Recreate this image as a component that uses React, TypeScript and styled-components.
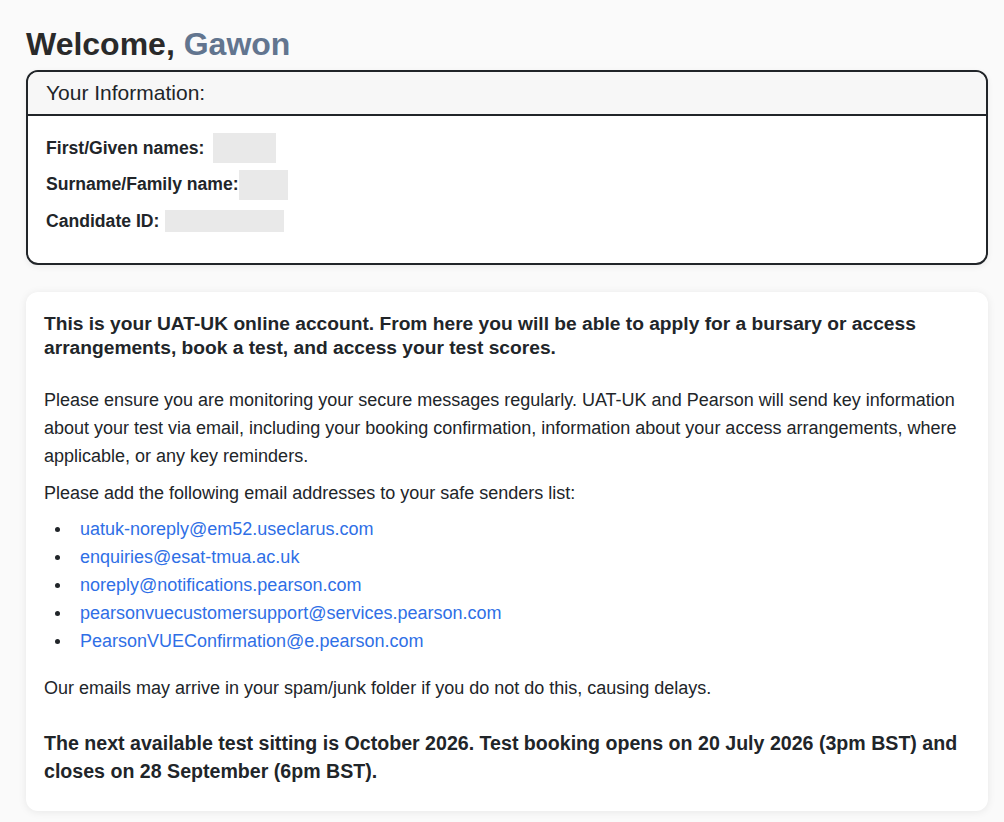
import React from "react";
import styled, { createGlobalStyle } from "styled-components";

const Global = createGlobalStyle`
  html, body { margin: 0; padding: 0; background: #fafafa; }
  body { font-family: "Liberation Sans", Arial, Helvetica, sans-serif; color: #212529; }
`;

const Page = styled.main`
  padding: 24px 16px 10px 26px;
  display: flex;
  flex-direction: column;
`;

const Title = styled.h1`
  margin: 0 0 6px;
  font-size: 32px;
  line-height: 40px;
  font-weight: 700;
  color: #2a2a2a;
`;

const Name = styled.span`
  color: #62758f;
`;

const InfoCard = styled.section`
  border: 2px solid #212529;
  border-radius: 12px;
  background: #fff;
  overflow: hidden;
  box-shadow: 0 2px 6px rgba(0, 0, 0, 0.06);
`;

const InfoHeader = styled.div`
  background: #f7f7f7;
  border-bottom: 2px solid #212529;
  height: 42px;
  display: flex;
  align-items: center;
  padding: 0 18px;
  font-size: 21px;
  color: #212529;
`;

const InfoBody = styled.div`
  padding: 17px 18px 27px;
  display: flex;
  flex-direction: column;
  gap: 6.5px;
`;

const InfoRow = styled.div`
  display: flex;
  align-items: center;
  min-height: 30px;
  font-size: 17.6px;
  font-weight: 700;
`;

const Redacted = styled.span<{ $w: number; $h: number; $gap: number }>`
  display: inline-block;
  width: ${(p) => p.$w}px;
  height: ${(p) => p.$h}px;
  margin-left: ${(p) => p.$gap}px;
  background: #e9e9e9;
`;

const ContentCard = styled.section`
  margin-top: 27px;
  background: #fff;
  border-radius: 12px;
  box-shadow: 0 1px 8px rgba(0, 0, 0, 0.08);
  padding: 20px 20px 26px 18px;
`;

const Lead = styled.p`
  margin: 0 0 26px;
  font-size: 19.2px;
  line-height: 24px;
  font-weight: 700;
  color: #212529;
`;

const Para = styled.p<{ $mb?: number }>`
  margin: 0 0 ${(p) => p.$mb ?? 8}px;
  font-size: 18px;
  line-height: 28px;
  color: #212529;
`;

const List = styled.ul`
  margin: 0 0 19px;
  padding: 0;
  list-style: none;
  font-size: 18px;
  line-height: 28px;
`;

const Item = styled.li`
  display: flex;
  align-items: center;
  padding-left: 11px;

  &::before {
    content: "";
    flex: none;
    width: 5px;
    height: 5px;
    border-radius: 50%;
    background: #212529;
    margin-right: 20px;
  }
`;

const Link = styled.a`
  color: #2f6fe6;
  text-decoration: none;
`;

const Closing = styled.p`
  margin: 27px 0 0;
  font-size: 19.6px;
  line-height: 28px;
  font-weight: 700;
  color: #212529;
`;

const emails = [
  "uatuk-noreply@em52.useclarus.com",
  "enquiries@esat-tmua.ac.uk",
  "noreply@notifications.pearson.com",
  "pearsonvuecustomersupport@services.pearson.com",
  "PearsonVUEConfirmation@e.pearson.com",
];

export default function App() {
  return (
    <>
      <Global />
      <Page>
        <Title>
          Welcome, <Name>Gawon</Name>
        </Title>
        <InfoCard>
          <InfoHeader>Your Information:</InfoHeader>
          <InfoBody>
            <InfoRow>
              First/Given names:<Redacted $w={63} $h={30} $gap={9} />
            </InfoRow>
            <InfoRow>
              Surname/Family name:<Redacted $w={49} $h={30} $gap={0} />
            </InfoRow>
            <InfoRow>
              Candidate ID:<Redacted $w={119} $h={22} $gap={6} />
            </InfoRow>
          </InfoBody>
        </InfoCard>
        <ContentCard>
          <Lead>
            This is your UAT-UK online account. From here you will be able to apply for a bursary or access
            arrangements, book a test, and access your test scores.
          </Lead>
          <Para $mb={9}>
            Please ensure you are monitoring your secure messages regularly. UAT-UK and Pearson will send key
            information about your test via email, including your booking confirmation, information about your
            access arrangements, where applicable, or any key reminders.
          </Para>
          <Para>Please add the following email addresses to your safe senders list:</Para>
          <List>
            {emails.map((e) => (
              <Item key={e}>
                <Link href={`mailto:${e}`}>{e}</Link>
              </Item>
            ))}
          </List>
          <Para $mb={0}>Our emails may arrive in your spam/junk folder if you do not do this, causing delays.</Para>
          <Closing>
            The next available test sitting is October 2026. Test booking opens on 20 July 2026 (3pm BST) and
            closes on 28 September (6pm BST).
          </Closing>
        </ContentCard>
      </Page>
    </>
  );
}
